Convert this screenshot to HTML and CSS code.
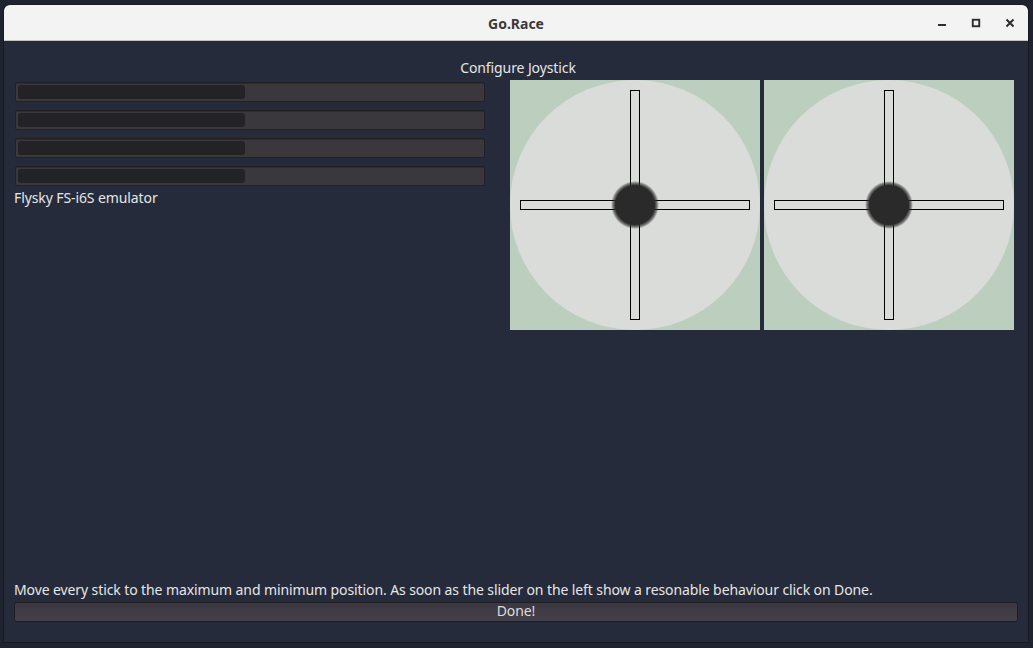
FILE: index.html
```html
<!DOCTYPE html>
<html>
<head>
<meta charset="utf-8">
<link rel="stylesheet" href="styles.css">
</head>
<body>
<div class="desktop">
  <div class="window">
    <div class="titlebar">
      <div></div>
      <div class="title">Go.Race</div>
      <div class="controls">
        <div class="ctl"><svg width="10" height="10" viewBox="0 0 10 10"><rect x="1" y="6" width="8" height="2" fill="#2e2e2e"/></svg></div>
        <div class="ctl"><svg width="10" height="10" viewBox="0 0 10 10"><rect x="1.75" y="1.75" width="6.5" height="6.5" fill="none" stroke="#2e2e2e" stroke-width="1.9"/></svg></div>
        <div class="ctl"><svg width="10" height="10" viewBox="0 0 10 10"><path d="M1.5 1.5 L8.5 8.5 M8.5 1.5 L1.5 8.5" stroke="#2e2e2e" stroke-width="2"/></svg></div>
      </div>
    </div>
    <div class="content">
      <div class="heading">Configure Joystick</div>
      <div class="main">
        <div class="left">
          <div class="bar"><div class="fill" style="width:49%"></div></div>
          <div class="bar"><div class="fill" style="width:49%"></div></div>
          <div class="bar"><div class="fill" style="width:49%"></div></div>
          <div class="bar"><div class="fill" style="width:49%"></div></div>
          <div class="device">Flysky FS-i6S emulator</div>
        </div>
        <div class="sticks">
          <div class="stick">
            <div class="disc"></div>
            <div class="vbar"></div>
            <div class="hbar"></div>
            <div class="knob"></div>
          </div>
          <div class="stick">
            <div class="disc"></div>
            <div class="vbar"></div>
            <div class="hbar"></div>
            <div class="knob"></div>
          </div>
        </div>
      </div>
      <div class="spacer"></div>
      <div class="hint">Move every stick to the maximum and minimum position. As soon as the slider on the left show a resonable behaviour click on Done.</div>
      <button class="done">Done!</button>
    </div>
  </div>
</div>
</body>
</html>
```

FILE: styles.css
```css
* { box-sizing: border-box; }
html, body {
  margin: 0;
  padding: 0;
  width: 1033px;
  height: 648px;
  overflow: hidden;
  background: #1f2330;
  font-family: "Noto Sans", "Open Sans", sans-serif;
}
.desktop {
  width: 1033px;
  height: 648px;
  padding: 5px 5px 0 4px;
}
.window {
  width: 1024px;
  height: 637px;
  background: #252b3b;
  border-radius: 6px 6px 0 0;
  display: flex;
  flex-direction: column;
  overflow: hidden;
  box-shadow: 0 0 0 1px #171a22;
}
.titlebar {
  height: 36px;
  flex: none;
  background: #f3f3f3;
  border-bottom: 1px solid #c4c4be;
  display: grid;
  grid-template-columns: 1fr auto 1fr;
  align-items: center;
}
.title {
  font-weight: bold;
  font-size: 14px;
  color: #3a3a3a;
  padding-top: 1px;
}
.controls {
  display: flex;
  justify-content: flex-end;
  padding-right: 1px;
}
.ctl {
  width: 34px;
  height: 35px;
  display: flex;
  align-items: center;
  justify-content: center;
}
.content {
  flex: 1;
  display: flex;
  flex-direction: column;
  padding: 18px 10px 20px 10px;
  color: #e6e6e6;
  font-size: 14px;
  letter-spacing: -0.1px;
}
.heading {
  text-align: center;
  height: 17px;
  line-height: 17px;
  margin-bottom: 4px;
  padding-left: 4px;
}
.main {
  display: flex;
  gap: 24px;
}
.left {
  width: 472px;
  display: flex;
  flex-direction: column;
  gap: 8px;
  padding-top: 2px;
}
.bar {
  margin: 0 1px;
  height: 20px;
  background: #3a383d;
  border: 1px solid #222226;
  border-radius: 2px;
  padding: 2px;
  box-shadow: inset 0 1px 0 #2c2b2f;
}
.fill {
  height: 100%;
  background: #232325;
  border-radius: 3px;
}
.device {
  margin-top: -5px;
  line-height: 17px;
}
.sticks {
  display: flex;
  gap: 4px;
}
.stick {
  width: 250px;
  height: 250px;
  background: #bccfbf;
  display: grid;
  place-items: center;
}
.stick > * { grid-area: 1 / 1; }
.disc {
  width: 250px;
  height: 250px;
  border-radius: 50%;
  background: #dadcd9;
}
.vbar {
  width: 10px;
  height: 230px;
  border: 1px solid #000;
}
.hbar {
  width: 230px;
  height: 10px;
  border: 1px solid #000;
}
.knob {
  width: 48px;
  height: 48px;
  border-radius: 50%;
  background: radial-gradient(circle closest-side, #2a2a2a 0, #2a2a2a 19.5px, rgba(42,42,42,0.55) 22px, rgba(42,42,42,0) 24px);
}
.spacer { flex: 1; }
.hint {
  line-height: 17px;
  margin-bottom: 4px;
}
.done {
  height: 20px;
  width: 1004px;
  font-family: inherit;
  font-size: 14px;
  letter-spacing: -0.1px;
  color: #dcdcdc;
  background: linear-gradient(#3b3840, #45414a);
  border: 1px solid #1e1e22;
  border-radius: 2px;
  padding: 0 0 2px 0;
  line-height: 16px;
}
```
